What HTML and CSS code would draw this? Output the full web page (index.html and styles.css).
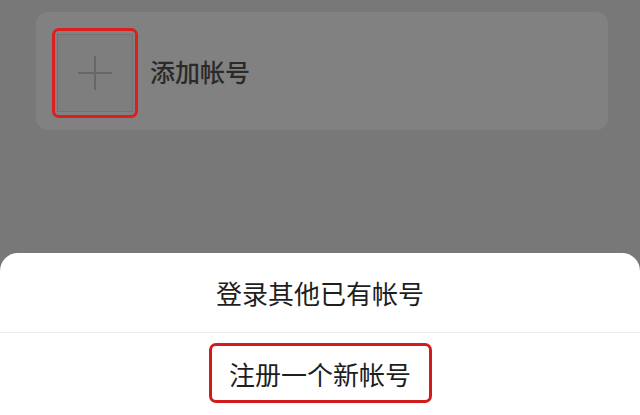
FILE: index.html
```html
<!DOCTYPE html>
<html lang="zh-CN">
<head>
    <meta charset="UTF-8">
    <meta name="viewport" content="width=device-width, initial-scale=1.0">
    <link rel="stylesheet" href="styles.css">
    <title>帐号</title>
</head>
<body>
    <div class="screen">
        <div class="account-card">
            <div class="mark">
                <div class="add-box">
                    <svg width="36" height="36" viewBox="0 0 36 36">
                        <path d="M18 1V35M1 18H35" stroke="#676767" stroke-width="2" fill="none"/>
                    </svg>
                </div>
            </div>
            <span class="add-text">添加帐号</span>
        </div>

        <div class="sheet">
            <div class="sheet-row">登录其他已有帐号</div>
            <div class="sheet-row register">
                <div class="mark-text">注册一个新帐号</div>
            </div>
        </div>
    </div>
</body>
</html>
```

FILE: styles.css
```css
html, body {
    margin: 0;
    padding: 0;
}
body {
    background-color: #787878;
    font-family: "Noto Sans CJK SC", "Noto Sans", sans-serif;
}
.screen {
    height: 415px;
    display: flex;
    flex-direction: column;
    justify-content: space-between;
    overflow: hidden;
}
.account-card {
    margin: 12px 32px 0 36px;
    height: 118px;
    padding: 0 16px;
    box-sizing: border-box;
    background-color: #818181;
    border-radius: 12px;
    display: flex;
    align-items: center;
}
.mark {
    width: 86px;
    height: 90px;
    box-sizing: border-box;
    border: 3px solid #dc1e1e;
    border-radius: 7px;
    padding: 3px 2px;
    margin-top: 4px;
}
.add-box {
    width: 100%;
    height: 100%;
    box-sizing: border-box;
    border: 1px solid #727272;
    background-color: #7e7e7e;
    display: flex;
    justify-content: center;
    align-items: center;
}
.add-text {
    margin-left: 12px;
    font-size: 25px;
    font-weight: 500;
    color: #2a2a2a;
}
.sheet {
    height: 162px;
    background-color: #fff;
    border-radius: 18px 18px 0 0;
    display: flex;
    flex-direction: column;
}
.sheet-row {
    height: 79px;
    display: flex;
    justify-content: center;
    align-items: center;
    font-size: 26px;
    color: #1e1e1e;
}
.register {
    height: 82px;
    border-top: 1px solid #eeeeee;
    align-items: flex-start;
}
.mark-text {
    margin-top: 10px;
    width: 223px;
    height: 60px;
    box-sizing: border-box;
    border: 3px solid #d21c1c;
    border-radius: 7px;
    display: flex;
    justify-content: center;
    align-items: center;
}
```
